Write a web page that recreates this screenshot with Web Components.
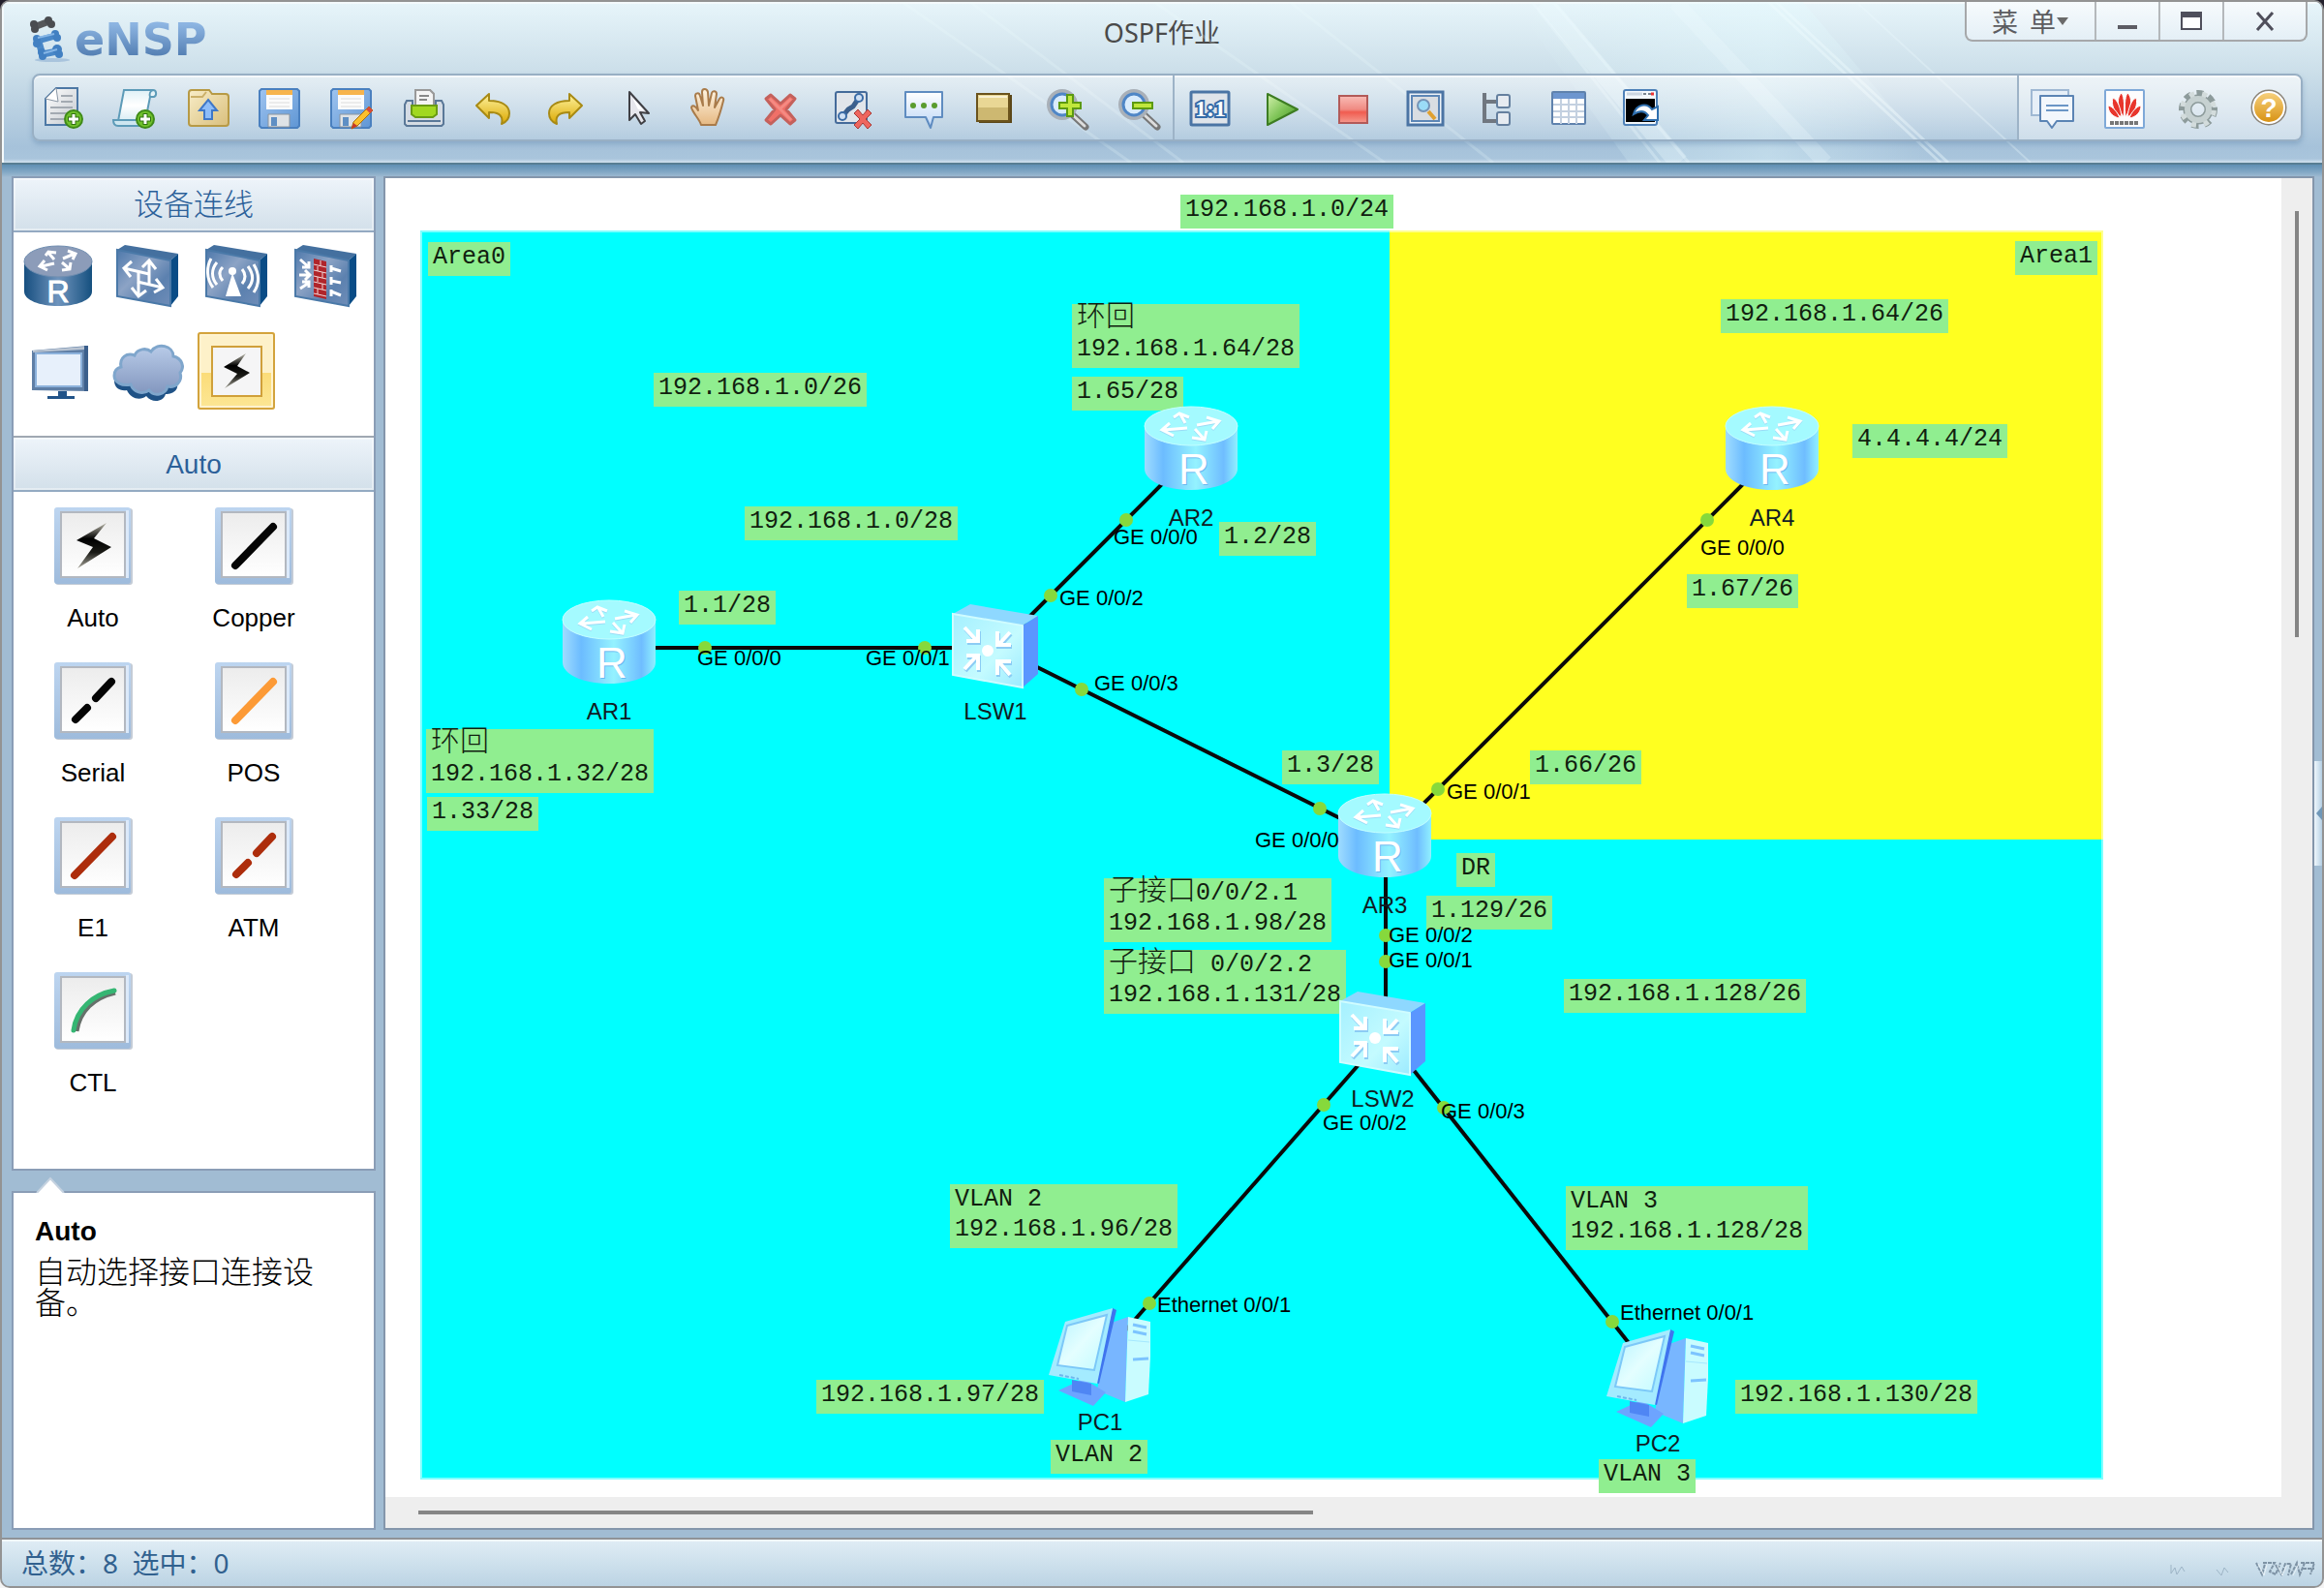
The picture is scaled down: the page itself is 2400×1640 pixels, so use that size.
<!DOCTYPE html>
<html lang="zh-CN">
<head>
<meta charset="utf-8">
<title>OSPF作业</title>
<style>
    html, body {
        margin: 0;
        height: 100%;
    }

    body {
        background: linear-gradient(#22202c 50%, #f4f4f4 50%);
        font-family: "Liberation Sans", "Noto Sans CJK SC", sans-serif;
    }
</style>
</head>
<body>
<ensp-window>
    <app-header slot="header"></app-header>
    <device-sidebar slot="sidebar"></device-sidebar>
    <topology-view slot="canvas"></topology-view>
    <status-bar slot="status">总数：8&nbsp; 选中：0</status-bar>
</ensp-window>

<script>
// ==================== 图标 ====================

const PLUS_BADGE = `
    <circle cx="35" cy="35" r="9" fill="#6fc02c" stroke="#3f8a18" stroke-width="2"/>
    <path d="M35 29v12M29 35h12" stroke="#2f7010" stroke-width="5"/>
    <path d="M35 30v10M30 35h10" stroke="#fff" stroke-width="3"/>`;

const FLOPPY = `
    <linearGradient id="f" x2="1" y2="1"><stop stop-color="#9fc4f0"/><stop offset="1" stop-color="#5f96d4"/></linearGradient>
    <path d="M7 4h37l2 2v36l-2 2H7l-2-2V6z" fill="url(#f)" stroke="#4a80bf" stroke-width="2"/>
    <rect x="12" y="5" width="27" height="5" fill="#f7b44c"/>
    <rect x="12" y="10" width="27" height="15" fill="#fbfbfb"/>
    <path d="M15 14h21M15 18h21M15 22h21" stroke="#dcdcdc" stroke-width="1"/>
    <path d="M14 30h22v13H14z" fill="#dfe3e6" stroke="#8a949e"/>
    <rect x="17" y="33" width="6" height="9" fill="#5f8fc4"/>`;

const LENS = `
    <path d="M30 30l14 13" stroke="#777" stroke-width="7" stroke-linecap="round"/>
    <path d="M30 30l13 12" stroke="#ddd" stroke-width="3" stroke-linecap="round"/>
    <circle cx="20" cy="20" r="14" fill="#cfe3f8" stroke="#a9b0b8" stroke-width="4"/>
    <circle cx="20" cy="20" r="11" fill="#d9ebfc" stroke="#4f86c6" stroke-width="3"/>`;

const UNDO = `
    <linearGradient id="u" x2="0" y2="1"><stop stop-color="#fdf3a0"/><stop offset="1" stop-color="#dca800"/></linearGradient>
    <path d="M7 21L20 9v7c13 0 21 5 21 13 0 5-3 9-8 11 2-8-2-12-13-12v6z" fill="url(#u)" stroke="#a88a14" stroke-width="2" stroke-linejoin="round"/>`;

const BOX_FACE = `
    <linearGradient id="b" x1="0" x2="1" y2="1"><stop stop-color="#4d78ab"/><stop offset=".4" stop-color="#8ca3c5"/><stop offset=".7" stop-color="#5c81af"/><stop offset="1" stop-color="#6f8db8"/></linearGradient>
    <path d="M9 14l8-5 55 9-8 7z" fill="#44709f"/>
    <path d="M64 25l8-7v44l-8 10z" fill="#0a4c86"/>
    <path d="M9 14l55 11v47L9 62z" fill="url(#b)" stroke="#4a79a8" stroke-width="2"/>`;

const TILE = `
    <linearGradient id="t" x2="0" y2="1"><stop stop-color="#bdd5f0"/><stop offset="1" stop-color="#9ebbdc"/></linearGradient>
    <linearGradient id="i" x2="0" y2="1"><stop stop-color="#ececec"/><stop offset="1" stop-color="#fff"/></linearGradient>
    <rect x="1" y="1" width="80" height="79" rx="3" fill="#c3cbd6"/>
    <rect width="79" height="79" rx="3" fill="url(#t)"/>
    <path d="M74 3h3v70h-3z" fill="#dbe9fa"/>
    <rect x="7" y="5" width="66" height="67" fill="url(#i)" stroke="#b3b8c0" stroke-width="2"/>`;

const BOLT = '<linearGradient id="z" x2="0" y2="1"><stop stop-color="#bbb9ac"/><stop offset=".35" stop-color="#000"/><stop offset=".65" stop-color="#1a1a16"/><stop offset="1" stop-color="#a9a79c"/></linearGradient>';

const line = (d, color) => `${TILE}<path d="${d}" fill="none" stroke="${color}" stroke-width="8" stroke-linecap="round"/>`;

const ICONS = {
    newTopo: [48, 48, `
        <linearGradient id="n" x2="1" y2="1"><stop stop-color="#fff"/><stop offset="1" stop-color="#c3c8ce"/></linearGradient>
        <path d="M17 3h22v38H6V14z" fill="url(#n)" stroke="#4d78a5" stroke-width="2"/>
        <path d="M22 11h12M22 17h12M11 23h23M11 29h18M11 35h14" stroke="#a3aab2" stroke-width="2"/>
        <path d="M17 3l2 14-13-3z" fill="#fff" stroke="#8b98a6"/>${PLUS_BADGE}`],
    newPaper: [48, 48, `
        <linearGradient id="n" x2="0" y2="1"><stop stop-color="#dff1f7"/><stop offset=".5" stop-color="#fff"/><stop offset="1" stop-color="#d8ecf4"/></linearGradient>
        <path d="M13 5h30c4 0 4 6 1 7h-4l-5 25H7z" fill="url(#n)" stroke="#5d9bb8" stroke-width="2"/>
        <path d="M43 5c-3 1-4 4-3 7" fill="none" stroke="#5d9bb8" stroke-width="2"/>
        <path d="M2 36h27v6H7c-4 0-5-3-5-6z" fill="#cde6f0" stroke="#5d9bb8" stroke-width="2"/>${PLUS_BADGE}`],
    open: [48, 48, `
        <linearGradient id="n" x2="1" y2="1"><stop stop-color="#f8edc8"/><stop offset="1" stop-color="#d9bf7c"/></linearGradient>
        <path d="M6 8c0-2 1-3 3-3h18l3 4h14c2 0 3 1 3 3v27c0 2-1 3-3 3H9c-2 0-3-1-3-3z" fill="url(#n)" stroke="#b79a45" stroke-width="2"/>
        <path d="M8 12h12l4-5" fill="none" stroke="#cbb069" stroke-width="2"/>
        <path d="M26 15l9 11h-5v9h-8v-9h-5z" fill="#8ebdf8" stroke="#3f78c8" stroke-width="2"/>`],
    save: [48, 48, FLOPPY],
    saveAs: [48, 48, `${FLOPPY}
        <path d="M44 22l4 4-16 16-6 3 2-7z" fill="#fbc02d" stroke="#a8700c"/>
        <path d="M44 22l4 4-3 3-4-4z" fill="#d9483b"/><path d="M28 39l4 3-6 3z" fill="#c8352c"/>`],
    print: [48, 48, `
        <path d="M18 5h15l4 4v14H18z" fill="#f4f4f4" stroke="#999" stroke-width="2"/>
        <path d="M22 11h10M22 15h8M22 19h10" stroke="#888" stroke-width="2"/>
        <path d="M9 16h6v10h24V16h6l2 4v20l-2 2H9l-2-2V20z" fill="#d5dce4" stroke="#5a7898" stroke-width="2"/>
        <path d="M18 5h15l4 4v14H18z" fill="#f4f4f4" stroke="#999" stroke-width="2"/>
        <path d="M22 11h10M22 15h8" stroke="#888" stroke-width="2"/>
        <path d="M14 21h26v9l-4 3H18l-4-3z" fill="#a1d821" stroke="#6a9c14" stroke-width="2"/>
        <path d="M10 37h34" stroke="#5a7898" stroke-width="2"/>`],
    undo: [48, 48, UNDO],
    redo: [48, 48, `<g transform="matrix(-1 0 0 1 49 0)">${UNDO}</g>`],
    pointer: [48, 48, '<path d="M17 7l20 22-9-1 5 9-4 3-6-10-6 6z" fill="#e6e6ec" stroke="#3f3f44" stroke-width="2" stroke-linejoin="round"/><path d="M20 13l12 13-6-1z" fill="#fff"/>'],
    hand: [48, 48, `
        <linearGradient id="n" x2="0" y2="1"><stop stop-color="#fff5e2"/><stop offset="1" stop-color="#e6b983"/></linearGradient>
        <path d="M17 41c-1-5-9-13-10-18 1-3 4-2 7 3L11 11c0-3 4-4 5 0l3 10-1-14c0-4 5-4 6 0l1 14 3-13c1-3 5-2 5 1l-2 14 5-9c2-3 5-1 4 2-2 8-5 18-8 25z" fill="url(#n)" stroke="#a97b4a" stroke-width="2" stroke-linejoin="round"/>`],
    remove: [48, 48, '<path d="M10 14l5-4 10 9 10-9 5 4-9 11 9 11-5 4-10-9-10 9-5-4 9-11z" fill="#f07068" stroke="#c4615c" stroke-width="3" stroke-linejoin="round"/><path d="M14 14l22 22M36 14L25 24" stroke="#f58a82" stroke-width="3"/>'],
    removeLink: [48, 48, `
        <rect x="8" y="7" width="32" height="32" rx="2" fill="#e1e5ea" stroke="#456b9a" stroke-width="2"/>
        <path d="M16 31l5-6 5-3 6-9" fill="none" stroke="#3b5f8c" stroke-width="5"/>
        <circle cx="15" cy="32" r="4" fill="#cfe0f4" stroke="#3b6ca6" stroke-width="2"/><circle cx="32" cy="13" r="4" fill="#cfe0f4" stroke="#3b6ca6" stroke-width="2"/>
        <path d="M27 29l4-4 5 6 5-6 4 4-6 6 6 6-4 4-5-6-5 6-4-4 6-6z" fill="#ee665e" stroke="#a83a36"/>`],
    text: [48, 48, `
        <linearGradient id="n" x2="0" y2="1"><stop stop-color="#fff"/><stop offset="1" stop-color="#bcd6f6"/></linearGradient>
        <path d="M6 7h38v26h-9l-3 11-5-11H6z" fill="url(#n)" stroke="#5f8cc0" stroke-width="2" stroke-linejoin="round"/>
        <g fill="#5a9c2e"><circle cx="14" cy="21" r="3"/><circle cx="25" cy="21" r="3"/><circle cx="36" cy="21" r="3"/></g>`],
    shape: [48, 48, `
        <path d="M8 10h34v29H8z" fill="#5c4718"/>
        <rect x="6" y="9" width="33" height="28" fill="#e9d795" stroke="#6b531c" stroke-width="2"/>
        <path d="M8 11h29v2H8z" fill="#f8f0d0"/><path d="M7 23h31v13H7z" fill="#cdb871"/>`],
    zoomIn: [48, 48, `${LENS}<path d="M28 9v24M16 21h24" stroke="#5c9a12" stroke-width="8"/><path d="M28 11v20M18 21h20" stroke="#c0e73c" stroke-width="4"/>`],
    zoomOut: [48, 48, `${LENS}<path d="M18 21h22" stroke="#5c9a12" stroke-width="8"/><path d="M20 21h18" stroke="#c0e73c" stroke-width="4"/>`],
    actual: [48, 48, `
        <rect x="5" y="7" width="39" height="34" rx="1" fill="#dfe4ea" stroke="#4b74a4" stroke-width="3"/>
        <text x="25" y="32" text-anchor="middle" font-family="Liberation Serif, serif" font-weight="bold" font-size="24" fill="#fff" stroke="#356ba8" stroke-width="4" paint-order="stroke">1:1</text>`],
    start: [48, 48, `
        <linearGradient id="n" x2="1" y2="1"><stop stop-color="#d5f2ae"/><stop offset=".5" stop-color="#7fc558"/><stop offset="1" stop-color="#3f8e1e"/></linearGradient>
        <path d="M10 9l31 16-31 16z" fill="url(#n)" stroke="#3d7d22" stroke-width="2" stroke-linejoin="round"/>`],
    stop: [48, 48, `
        <linearGradient id="n" x2="0" y2="1"><stop stop-color="#f9bcb6"/><stop offset=".5" stop-color="#f08a82"/><stop offset=".6" stop-color="#f05c50"/><stop offset="1" stop-color="#f59a8e"/></linearGradient>
        <rect x="10" y="11" width="29" height="28" fill="url(#n)" stroke="#b25a58" stroke-width="2"/>`],
    capture: [48, 48, `
        <rect x="7" y="7" width="36" height="34" fill="#eef3f8" stroke="#4b74a4" stroke-width="3"/>
        <rect x="11" y="11" width="28" height="26" fill="#d9dde2" stroke="#5c86b6" stroke-width="2"/>
        <path d="M28 27l7 8" stroke="#e0a030" stroke-width="4"/><circle cx="23" cy="21" r="6" fill="#9bdcf7" stroke="#7593b6" stroke-width="2"/>`],
    tree: [48, 48, `
        <path d="M12 8v29h13M12 17h13" fill="none" stroke="#707780" stroke-width="4"/>
        <g fill="#e6ebf1" stroke="#65809f" stroke-width="2"><rect x="25" y="10" width="13" height="13" rx="2"/><rect x="25" y="28" width="13" height="13" rx="2"/></g>`],
    table: [48, 48, `
        <rect x="8" y="7" width="34" height="33" rx="1" fill="#fff" stroke="#5f82ad" stroke-width="2"/>
        <path d="M9 8h32v6H9z" fill="#6d96cf"/>
        <path d="M9 20h32M9 27h32M9 33h32M17 14v26M25 14v26M33 14v26" stroke="#c3d0e0" stroke-width="2"/>`],
    console: [48, 48, `
        <rect x="8" y="5" width="34" height="36" rx="2" fill="#f3f8fc" stroke="#4e81b8" stroke-width="2"/>
        <path d="M11 9h16" stroke="#ccd6e0" stroke-width="3"/><path d="M28 9h3M33 9h3" stroke="#7a8590" stroke-width="2"/><path d="M36 9h3" stroke="#e33" stroke-width="3"/>
        <path d="M10 14h30v24H10z"/>
        <path d="M18 30c3-11 14-12 19-5l6-3v14H29l4-5c-4-5-9-5-15-1z" fill="#fff" stroke="#2f6fae" stroke-width="2"/>`],
    forum: [48, 48, `
        <path d="M1 5h38v26H1z" fill="#e6eff8" stroke="#9fb8d3" stroke-width="2"/>
        <path d="M10 11h34v26H27l-5 7-5-7h-7z" fill="#f2f7fc" stroke="#5b84b4" stroke-width="2" stroke-linejoin="round"/>
        <path d="M16 21h23M16 26h23" stroke="#6b96c6" stroke-width="2"/>`],
    huawei: [48, 48, `
        <rect x="3" y="5" width="40" height="39" rx="1" fill="#fdfdfe" stroke="#7fa9d8" stroke-width="2"/>
        <g fill="#e8352c" stroke="#fdfdfe"><path d="M22 33C15 22 15 12 20 8c3 5 3 15 2 25zM24 33c7-11 7-21 2-25-3 5-3 15-2 25z"/>
        <path d="M20 33C12 28 9 20 11 13c5 2 8 11 9 20zM26 33c8-5 11-13 9-20-5 2-8 11-9 20z"/>
        <path d="M18 34C11 33 6 28 6 21c5 1 10 7 12 13zM28 34c7-1 12-6 12-13-5 1-10 7-12 13z"/></g>
        <path d="M8 39h30" stroke="#777" stroke-width="4" stroke-dasharray="4 1"/>`],
    settings: [48, 48, `
        <circle cx="25" cy="25" r="17" fill="none" stroke="#8d9b9b" stroke-width="6" stroke-dasharray="7 6"/>
        <circle cx="25" cy="25" r="11" fill="none" stroke="#8d9b9b" stroke-width="9"/>
        <circle cx="25" cy="25" r="16" fill="none" stroke="#d3dcdc" stroke-width="6" stroke-dasharray="5 8" stroke-dashoffset="-1"/>
        <circle cx="25" cy="25" r="11" fill="none" stroke="#c6d1d1" stroke-width="6"/>`],
    help: [48, 48, `
        <linearGradient id="n" x2="0" y2="1"><stop stop-color="#f8d382"/><stop offset="1" stop-color="#d68f0e"/></linearGradient>
        <circle cx="24" cy="23" r="17" fill="url(#n)" stroke="#8b8478" stroke-width="3"/><circle cx="24" cy="23" r="16" fill="none" stroke="#fff" stroke-width="2"/>
        <text x="24" y="33" text-anchor="middle" font-family="Liberation Sans, sans-serif" font-weight="bold" font-size="28" fill="#fff">?</text>`],

    router: [80, 80, `
        <linearGradient id="n"><stop stop-color="#174f80"/><stop offset=".5" stop-color="#6f94bd"/><stop offset="1" stop-color="#15507f"/></linearGradient>
        <path d="M5 26v31c0 9 16 15 35 15s35-6 35-15V26z" fill="url(#n)"/>
        <ellipse cx="40" cy="26" rx="35" ry="16" fill="#8c9cb9" stroke="#6f8db0"/>
        <g fill="none" stroke="#fff" stroke-width="3"><path d="M36 24l-6-7M27 20l3-4 8 1M45 23l12-5M50 15l8 3-3 6M44 27l7 6M53 27l-1 7-8 1M36 28l-13 3M26 25l-5 6 8 4"/></g>
        <text x="40" y="68" text-anchor="middle" font-family="Liberation Sans, sans-serif" font-size="32" fill="#fff" stroke="#fff">R</text>`],
    switch: [80, 80, `${BOX_FACE}
        <g fill="none" stroke="#fff" stroke-width="3">
            <path d="M42 39L16 33M24 26l-8 7 7 9"/>
            <path d="M42 50V25M35 32l7-7 7 9"/>
            <path d="M30 47l26 6M49 44l7 9-9 5"/>
            <path d="M31 36v26M24 53l7 9 8-6"/>
        </g>`],
    wlan: [80, 80, `${BOX_FACE}
        <path d="M36 38l-7 24h16z" fill="#fff"/><circle cx="36" cy="36" r="4" fill="#fff"/>
        <path d="M26 32c-4 4-4 9 0 14M20 27c-6 7-6 16 0 23M14 23c-5 9-5 21 2 30M46 34c4 5 4 10 0 15M52 31c6 8 6 16 0 23M58 29c6 10 6 20 0 29" fill="none" stroke="#fff" stroke-width="3"/>`],
    firewall: [80, 80, `${BOX_FACE}
        <path d="M28 23l13 3v39l-13-3z" fill="#b0252b"/>
        <path d="M28 29l13 3M28 35l13 3M28 41l13 3M28 47l13 3M28 53l13 3M28 59l13 3M35 25v5M32 31v5M37 37v6M32 42v5M37 49v6M32 54v6" stroke="#f2d6d6" stroke-width="1"/>
        <path d="M14 24l9 8M23 26v6h-7M13 40h10M19 35l5 5-5 5M14 54l9-6M16 47h7v6M46 33l10 3M46 30v7M46 46l10 2M46 42v8M46 57l10 4M46 55v7" fill="none" stroke="#fff" stroke-width="3"/>`],
    terminal: [80, 80, `
        <path d="M13 19l58-5v47l-58-1z" fill="#5f7fa6"/><path d="M67 14h4v47h-4z" fill="#3b5f8c"/>
        <path d="M14 19l53-4v3l-53 3z" fill="#b9c4d2"/>
        <path d="M17 22h47v34H17z" fill="#e7f0fb" stroke="#8db2dc" stroke-width="2"/>
        <path d="M40 61h9v5h8v3H29v-3h11z" fill="#225489"/>`],
    cloud: [80, 80, `
        <linearGradient id="n" x2="0" y2="1"><stop stop-color="#b8cbe8"/><stop offset="1" stop-color="#8296be"/></linearGradient>
        <path d="M6 50c0 8 6 11 13 10 4 9 14 11 20 6 6 8 18 6 20-2 9 0 15-6 11-13l-30-9z" fill="#1f5286"/>
        <path d="M13 36c-2-10 6-15 14-12 3-7 12-8 17-4 7-10 23-6 23 5 9 2 12 11 7 17 3 9-5 16-13 14-2 9-14 11-19 4-7 5-16 2-19-6-9 2-17-2-17-9 0-5 3-8 7-9z" fill="url(#n)" stroke="#7fa6cc" stroke-width="3"/>`],
    cable: [80, 80, `${BOLT}
        <rect x="15" y="15" width="51" height="51" fill="#f5f5f6" stroke="#d0a03a" stroke-width="2"/>
        <path d="M50 22L27 36l14 7-13 15 26-16-13-7z" fill="url(#z)"/>`],

    auto: [81, 80, `${TILE}${BOLT}<path d="M54 16L23 34l17 7-16 22 35-22-18-9z" fill="url(#z)"/>`],
    copper: [81, 80, line('M21 60L60 20', '#050505')],
    serial: [81, 80, line('M22 59L34 47M43 37L59 20', '#050505')],
    pos: [81, 80, line('M21 60L60 20', '#fc9a36')],
    e1: [81, 80, line('M21 60L60 20', '#ad2d0c')],
    atm: [81, 80, line('M22 59L34 47M43 37L59 20', '#ad2d0c')],
    ctl: [81, 80, `${TILE}<path d="M23 61C26 40 41 26 63 21" fill="none" stroke="#66706a" stroke-width="5"/><path d="M20 60C23 38 40 23 62 19" fill="none" stroke="#35b673" stroke-width="5" stroke-linecap="round"/>`],

    nodeRouter: [96, 86, `
        <linearGradient id="n"><stop stop-color="#9fdcff"/><stop offset=".2" stop-color="#6cbcff"/><stop offset=".55" stop-color="#94f2ff"/><stop offset=".85" stop-color="#6fbdff"/><stop offset="1" stop-color="#90f0ff"/></linearGradient>
        <path d="M0 20v44c0 12 20 22 48 22s48-10 48-22V20z" fill="url(#n)"/>
        <ellipse cx="48" cy="20" rx="48" ry="20" fill="#a4faff" stroke="#c4ffff"/>
        <g fill="none" stroke="#9adcf6" stroke-width="3" transform="translate(0 1)"><path d="M42 17l-5-9M30 11l6-4 10 4M54 19l22-4M64 11l13 4-7 8M52 23l9 10M64 25l-2 9-13-2M44 22l-24 2M26 17l-8 7 12 6"/></g>
        <g fill="none" stroke="#fff" stroke-width="3"><path d="M42 17l-5-9M30 11l6-4 10 4M54 19l22-4M64 11l13 4-7 8M52 23l9 10M64 25l-2 9-13-2M44 22l-24 2M26 17l-8 7 12 6"/></g>
        <text x="52" y="81" text-anchor="middle" font-family="Liberation Sans, sans-serif" font-size="44" fill="#6ab8f0">R</text>
        <text x="51" y="80" text-anchor="middle" font-family="Liberation Sans, sans-serif" font-size="44" fill="#fff">R</text>`],
    nodeSwitch: [88, 86, `
        <linearGradient id="n" x2="1" y2="1"><stop stop-color="#a5f0ff"/><stop offset=".6" stop-color="#c4fbff"/><stop offset="1" stop-color="#9beaff"/></linearGradient>
        <path d="M0 10L18 0l70 12-16 10z" fill="#8ed8ff"/><path d="M72 22l16-10v60L72 86z" fill="#5a96ff"/>
        <path d="M0 10l72 12v64L0 73z" fill="url(#n)" stroke="#cffcff" stroke-width="2"/>
        <g fill="none" stroke="#8cccf4" stroke-width="4" transform="translate(1 2)"><path d="M12 24l13 14M26 26v12H14M59 29L47 42M46 28v14h14M12 67l13-14M14 53h12v15M59 73L47 59M46 73V59h14"/></g>
        <g fill="none" stroke="#fff" stroke-width="4"><path d="M12 24l13 14M26 26v12H14M59 29L47 42M46 28v14h14M12 67l13-14M14 53h12v15M59 73L47 59M46 73V59h14"/></g>
        <circle cx="36" cy="48" r="6" fill="#fff"/>`],
    nodePc: [106, 102, `
        <linearGradient id="n" x2="1" y2="1"><stop stop-color="#b6f4ff"/><stop offset=".5" stop-color="#e4feff"/><stop offset="1" stop-color="#c0fbff"/></linearGradient>
        <path d="M62 16l20-7-3 88-29-12z" fill="#78b6ff"/>
        <path d="M82 9l23 5v36l-2 39-24 8z" fill="#c9fcff"/>
        <path d="M87 17l14 3M87 24l14 3M87 53l16-1" stroke="#7cc4ff" stroke-width="3"/><path d="M82 33l22 2" stroke="#a5e8ff"/>
        <path d="M10 85l26-12 23 14-13 14z" fill="#6da4ff"/><path d="M24 74l20 4v12l-20-4z" fill="#4f86f4"/>
        <path d="M66 0l4 2-18 76-6-2z" fill="#3f74ee"/>
        <path d="M17 14L66 0 50 78 0 69z" fill="#a4ebff"/>
        <path d="M19 18l41-11-13 57-38-5z" fill="url(#n)" stroke="#7cc8f8" stroke-width="2"/>
        <path d="M11 69l20 4" stroke="#6fb6ee" stroke-width="2" stroke-dasharray="4 2"/>`]
};

class EnspIcon extends HTMLElement {
    static get observedAttributes() {
        return ['name'];
    }

    constructor() {
        super();
        this.attachShadow({ mode: 'open' });
    }

    attributeChangedCallback() {
        const icon = ICONS[this.getAttribute('name')];
        if (!icon) return;
        const [w, h, body] = icon;
        this.shadowRoot.innerHTML = `
            <style>
                :host { display: block; flex: none; }
                svg { display: block; overflow: visible; }
            </style>
            <svg width="${w}" height="${h}" viewBox="0 0 ${w} ${h}" aria-hidden="true">${body}</svg>
        `;
    }
}

// ==================== 窗口框架 ====================

class EnspWindow extends HTMLElement {
    constructor() {
        super();
        this.attachShadow({ mode: 'open' }).innerHTML = `
            <style>
                :host {
                    display: flex;
                    flex-direction: column;
                    box-sizing: border-box;
                    min-height: 100vh;
                    border: 2px solid #939393;
                    border-radius: 10px;
                    background: #a1bcd3;
                    overflow: hidden;
                }

                main {
                    flex: 1;
                    display: grid;
                    grid-template-columns: 376px minmax(0, 1fr) 8px;
                    column-gap: 8px;
                    padding: 12px 0 8px 10px;
                    background: linear-gradient(#5f8fb3, #84a9c6 8px, #a1bcd3 13px);
                }

                .canvas {
                    display: grid;
                    margin-right: -8px;
                }

                .handle {
                    align-self: center;
                    justify-self: end;
                    width: 8px;
                    height: 108px;
                    padding: 0;
                    margin-bottom: 82px;
                    border: none;
                    background: linear-gradient(90deg, #eef6fb, #cfe1ef 60%, #b3cde2);
                    display: flex;
                    align-items: center;
                    justify-content: flex-end;
                }
            </style>
            <slot name="header"></slot>
            <main>
                <slot name="sidebar"></slot>
                <div class="canvas"><slot name="canvas"></slot></div>
                <button class="handle" aria-label="展开">
                    <svg width="6" height="14"><path d="M6 0v14L0 7z" fill="#6f97b8"/></svg>
                </button>
            </main>
            <slot name="status"></slot>
        `;
    }
}

class AppHeader extends HTMLElement {
    constructor() {
        super();
        const left = [
            ['newTopo', '新建拓扑'], ['newPaper', '新建试卷'], ['open', '打开'], ['save', '保存'], ['saveAs', '另存为'],
            ['print', '打印'], ['undo', '撤销'], ['redo', '恢复'], ['pointer', '选择'], ['hand', '拖动'],
            ['remove', '删除'], ['removeLink', '删除连线'], ['text', '文本'], ['shape', '调色板'], ['zoomIn', '放大'], ['zoomOut', '缩小']
        ];
        const middle = [
            ['actual', '原始大小'], ['start', '启动设备'], ['stop', '停止设备'], ['capture', '数据抓包'],
            ['tree', '显示所有接口'], ['table', '显示网格'], ['console', '打开所有命令行']
        ];
        const right = [['forum', '论坛'], ['huawei', '官网'], ['settings', '设置'], ['help', '帮助']];
        const group = (items) => items.map(([icon, label]) => `
            <button aria-label="${label}"><ensp-icon name="${icon}"></ensp-icon></button>`).join('');

        this.attachShadow({ mode: 'open' }).innerHTML = `
            <style>
                :host {
                    display: block;
                    position: relative;
                    height: 166px;
                    border-bottom: 2px solid #587e93;
                    background: linear-gradient(#e7f5fa, #cbdee9 74px, #a6c2da 150px, #a9c5dc 162px, #d3e3ee);
                    box-shadow: inset 2px 2px 0 #f4fafc;
                }

                .shine {
                    position: absolute;
                    top: 0;
                    right: 296px;
                    pointer-events: none;
                }

                .title-row {
                    display: grid;
                    grid-template-columns: 1fr auto 1fr;
                    height: 74px;
                    align-items: start;
                }

                .logo {
                    display: flex;
                    align-items: center;
                    gap: 5px;
                    padding: 12px 0 0 28px;
                    font: bold 46px/54px "DejaVu Sans", sans-serif;
                }

                .logo span {
                    background: linear-gradient(#8db5e2 20%, #5580b4 80%);
                    background-clip: text;
                    color: transparent;
                }

                h1 {
                    margin: 12px 0 0;
                    font: 27px/40px "Noto Sans", "Noto Sans CJK SC", sans-serif;
                    color: #4a4a4a;
                }

                .controls {
                    justify-self: end;
                    display: flex;
                    height: 39px;
                    margin-right: 15px;
                    border: 2px solid #a6a8aa;
                    border-top: none;
                    border-radius: 0 0 8px 8px;
                    background: linear-gradient(#f7fbfd, #e4eff6);
                }

                .controls button {
                    width: 66px;
                    padding: 0;
                    border: none;
                    border-left: 2px solid #b4b8bb;
                    background: none;
                    font: 27px/38px "Noto Sans CJK SC", sans-serif;
                    color: #5c5c60;
                    display: flex;
                    align-items: center;
                    justify-content: center;
                }

                .controls .menu {
                    width: 132px;
                    border-left: none;
                }

                .controls .close {
                    width: 86px;
                }

                .toolbar {
                    position: relative;
                    display: flex;
                    box-sizing: border-box;
                    height: 70px;
                    margin: 0 20px 0 31px;
                    border: 2px solid #98afc4;
                    border-radius: 8px;
                    background: linear-gradient(rgba(255, 255, 255, .5), rgba(255, 255, 255, .12));
                    box-shadow: inset 0 2px 0 rgba(255, 255, 255, .6), 0 3px 5px rgba(90, 130, 170, .4);
                }

                .group {
                    display: flex;
                    align-items: center;
                    gap: 26px;
                    padding: 0 12px;
                    border-right: 2px solid #9db3c7;
                }

                .group:first-child {
                    padding-left: 6px;
                }

                .group:nth-child(2) {
                    flex: 1;
                }

                .group:last-child {
                    padding-right: 9px;
                    border: none;
                    border-radius: 0 6px 6px 0;
                    background: rgba(255, 255, 255, .35);
                }

                .group button {
                    padding: 2px 0 0;
                    border: none;
                    background: none;
                }
            </style>
            <svg class="shine" width="1200" height="166" viewBox="900 2 1200 166" aria-hidden="true">
                <linearGradient id="g"><stop stop-color="#e4fbff" stop-opacity="0"/><stop offset=".6" stop-color="#e4fbff" stop-opacity=".4"/><stop offset="1" stop-color="#e4fbff" stop-opacity="0"/></linearGradient>
                <path d="M1560 2h300l140 166h-320z" fill="url(#g)"/>
                <g stroke="#f0fdff" fill="none">
                    <path d="M930 2l236 166M1000 2l220 166M1190 2l238 166M1330 2l210 166" stroke-width="3" opacity=".2"/>
                    <path d="M1592 2l140 166" stroke-width="20" opacity=".3"/>
                    <path d="M1580 2l132 166M1602 2l140 166" stroke-width="3" opacity=".3"/>
                    <path d="M1728 2l155 166" stroke-width="16" opacity=".25"/>
                    <path d="M1824 2l178 166M1832 2l178 166" stroke-width="3" opacity=".4"/>
                    <path d="M1915 2l180 166" stroke-width="2" opacity=".3"/>
                </g>
            </svg>
            <div class="title-row">
                <div class="logo">
                    <svg width="42" height="48" viewBox="0 0 42 48" aria-hidden="true">
                        <ellipse cx="24" cy="45" rx="18" ry="2" fill="#a9c4dd"/>
                        <path d="M5 11L21 5" stroke="#55575a" stroke-width="7"/>
                        <g fill="#4a4c50"><circle cx="5" cy="8" r="4"/><circle cx="6" cy="13" r="4"/><circle cx="20" cy="4" r="4"/><circle cx="23" cy="8" r="4"/></g>
                        <path d="M9 25L27 20M10 26l4 14M14 39l15-3" fill="none" stroke="#4a88c8" stroke-width="7"/>
                        <g fill="#4280c2"><circle cx="8" cy="23" r="4"/><circle cx="8" cy="28" r="4"/><circle cx="27" cy="18" r="4"/><circle cx="29" cy="22" r="4"/><circle cx="13" cy="37" r="4"/><circle cx="14" cy="41" r="4"/><circle cx="29" cy="34" r="5"/><circle cx="31" cy="39" r="4"/></g>
                        <path d="M9 22l17-4M15 38l14-4" stroke="#86b6e6" stroke-width="2"/>
                    </svg>
                    <span>eNSP</span>
                </div>
                <h1>OSPF作业</h1>
                <div class="controls">
                    <button class="menu">菜&nbsp;&nbsp;单<svg width="14" height="10"><path d="M1 1h12L7 9z" fill="#6a6a6a"/></svg></button>
                    <button aria-label="最小化"><svg width="22" height="20"><path d="M1 16h20" stroke="#5c5c64" stroke-width="4"/></svg></button>
                    <button aria-label="最大化"><svg width="22" height="20"><path d="M1 1h20v17H1z" fill="#fff" stroke="#4f4f5b" stroke-width="2"/><path d="M0 0h22v6H0z" fill="#4f4f5b"/></svg></button>
                    <button class="close" aria-label="关闭"><svg width="22" height="20"><path d="M3 1l16 18M19 1L3 19" stroke="#4f4f5b" stroke-width="3"/></svg></button>
                </div>
            </div>
            <div class="toolbar" role="toolbar">
                <div class="group">${group(left)}</div>
                <div class="group">${group(middle)}</div>
                <div class="group">${group(right)}</div>
            </div>
        `;
    }
}

// ==================== 左侧设备栏 ====================

class DeviceSidebar extends HTMLElement {
    constructor() {
        super();
        const categories = [
            ['router', '路由器'], ['switch', '交换机'], ['wlan', '无线局域网'], ['firewall', '防火墙'],
            ['terminal', '终端'], ['cloud', '其它设备'], ['cable', '设备连线']
        ];
        const cables = ['Auto', 'Copper', 'Serial', 'POS', 'E1', 'ATM', 'CTL'];

        this.attachShadow({ mode: 'open' }).innerHTML = `
            <style>
                :host {
                    display: flex;
                    flex-direction: column;
                    gap: 21px;
                }

                section {
                    position: relative;
                    box-sizing: border-box;
                    border: 2px solid #8a9db6;
                    background: #fff;
                }

                .library {
                    flex: 1;
                }

                h2 {
                    margin: 0;
                    height: 54px;
                    border-bottom: 2px solid #94aac2;
                    background: linear-gradient(#eef4fa, #d3e0ea);
                    box-shadow: inset 0 0 0 2px rgba(255, 255, 255, .4);
                    font-weight: normal;
                    font-size: 28px;
                    line-height: 56px;
                    text-align: center;
                    color: #2b6099;
                }

                h2.cjk {
                    font-size: 31px;
                    font-weight: 300;
                }

                .categories {
                    display: grid;
                    grid-template-columns: repeat(4, 80px);
                    gap: 19px 12px;
                    height: 206px;
                    padding: 4px 0 0 6px;
                    align-content: start;
                    border-bottom: 2px solid #a0a8b2;
                }

                button {
                    padding: 0;
                    border: none;
                    background: none;
                    font: inherit;
                    color: #000;
                }

                .categories .active {
                    border-radius: 3px;
                    background: linear-gradient(#fdf1c9 52%, #fbdc78 52%, #fce796);
                    box-shadow: inset 0 0 0 2px #d3a33c, inset 0 0 0 4px #fff3cf;
                }

                .cables {
                    display: grid;
                    grid-template-columns: repeat(2, 120px);
                    gap: 30px 46px;
                    padding: 16px 0 0 22px;
                }

                .cables button {
                    display: flex;
                    flex-direction: column;
                    align-items: center;
                    gap: 18px;
                    font-size: 26px;
                    line-height: 32px;
                }

                .hint {
                    flex: 0 0 350px;
                    padding: 24px 22px;
                }

                .hint svg {
                    position: absolute;
                    left: 22px;
                    top: -17px;
                }

                h3 {
                    margin: 0 0 10px;
                    font-size: 28px;
                    line-height: 32px;
                }

                p {
                    margin: 0;
                    width: 300px;
                    font-size: 32px;
                    line-height: 32px;
                    font-weight: 300;
                }
            </style>
            <section class="library">
                <h2 class="cjk">设备连线</h2>
                <div class="categories">
                    ${categories.map(([icon, label]) => `
                    <button class="${icon === 'cable' ? 'active' : ''}" aria-label="${label}"><ensp-icon name="${icon}"></ensp-icon></button>`).join('')}
                </div>
                <h2>Auto</h2>
                <div class="cables">
                    ${cables.map((name) => `
                    <button><ensp-icon name="${name.toLowerCase()}"></ensp-icon>${name}</button>`).join('')}
                </div>
            </section>
            <section class="hint">
                <svg width="34" height="17"><path d="M2 17L16 2l14 15" fill="#fff" stroke="#c5d2e0" stroke-width="2"/></svg>
                <h3>Auto</h3>
                <p>自动选择接口连接设备。</p>
            </section>
        `;
    }
}

// ==================== 拓扑画布 ====================

/** 画布上的元素，坐标由 x / y 属性给出 */
class CanvasItem extends HTMLElement {
    constructor() {
        super();
        this.attachShadow({ mode: 'open' });
    }

    connectedCallback() {
        this.style.left = `${this.getAttribute('x')}px`;
        this.style.top = `${this.getAttribute('y')}px`;
        this.render();
    }
}

class NetLabel extends CanvasItem {
    render() {
        this.shadowRoot.innerHTML = `
            <style>
                :host {
                    display: block;
                    position: absolute;
                    padding: 0 5px 4px;
                    background: #90ee90;
                    font: 25px/31px "Liberation Mono", "Noto Sans CJK SC", monospace;
                    color: #10200f;
                    white-space: nowrap;
                }

                ::slotted(b) {
                    font-weight: 300;
                    font-size: 30px;
                    line-height: 26px;
                }
            </style>
            <slot></slot>
        `;
    }
}

class PortLabel extends CanvasItem {
    render() {
        this.shadowRoot.innerHTML = `
            <style>
                :host {
                    display: block;
                    position: absolute;
                    font-size: 22px;
                    line-height: 26px;
                    color: #000;
                    white-space: nowrap;
                }
            </style>
            <slot></slot>
        `;
    }
}

class NetNode extends CanvasItem {
    render() {
        this.shadowRoot.innerHTML = `
            <style>
                :host {
                    display: flex;
                    flex-direction: column;
                    align-items: center;
                    gap: 15px;
                    position: absolute;
                    font-size: 24px;
                    line-height: 28px;
                    color: #101c24;
                }

                :host([icon="nodeSwitch"]) {
                    gap: 11px;
                }

                :host([icon="nodePc"]) {
                    gap: 2px;
                }
            </style>
            <ensp-icon name="${this.getAttribute('icon')}"></ensp-icon>
            <slot></slot>
        `;
    }
}

class TopologyView extends HTMLElement {
    constructor() {
        super();
        const links = [
            [231, 485, 629, 485], [832, 286, 629, 489], [629, 483, 1032, 684], [1432, 286, 1032, 686],
            [1033, 686, 1033, 880], [1031, 886, 737, 1221], [1031, 882, 1314, 1241]
        ];
        const ports = [
            [330, 485], [557, 485], [765, 353], [687, 431], [719, 528], [965, 651], [1365, 353], [1087, 631],
            [1033, 782], [1033, 809], [969, 957], [1093, 960], [789, 1162], [1267, 1181]
        ];

        this.attachShadow({ mode: 'open' }).innerHTML = `
            <style>
                :host {
                    display: grid;
                    grid-template-columns: minmax(0, 1fr) 32px;
                    grid-template-rows: minmax(0, 1fr) 32px;
                    border: 2px solid #8496ab;
                    background: #eee;
                }

                .stage {
                    position: relative;
                    min-height: 1362px;
                    background: #fff;
                    overflow: hidden;
                }

                .area {
                    position: absolute;
                    box-sizing: border-box;
                }

                .area0 {
                    left: 36px;
                    top: 54px;
                    width: 1738px;
                    height: 1290px;
                    border: 2px solid #80ffff;
                    background: #0ff;
                }

                .area1 {
                    left: 1037px;
                    top: 54px;
                    width: 737px;
                    height: 629px;
                    border: 2px solid #ffff90;
                    border-width: 2px 2px 0 0;
                    background: #ffff20;
                }

                .links {
                    position: absolute;
                    left: 0;
                    top: 0;
                }

                .vbar {
                    padding: 34px 14px;
                }

                .vbar i {
                    display: block;
                    width: 4px;
                    height: 440px;
                    background: #858585;
                }

                .hbar {
                    padding: 14px 34px;
                }

                .hbar i {
                    display: block;
                    width: 924px;
                    height: 4px;
                    background: #858585;
                }
            </style>
            <div class="stage">
                <div class="area area0"></div>
                <div class="area area1"></div>

                <net-label x="821" y="17">192.168.1.0/24</net-label>
                <net-label x="44" y="66">Area0</net-label>
                <net-label x="277" y="201">192.168.1.0/26</net-label>
                <net-label x="709" y="130"><b>环回</b><br>192.168.1.64/28</net-label>
                <net-label x="709" y="205">1.65/28</net-label>
                <net-label x="371" y="339">192.168.1.0/28</net-label>
                <net-label x="861" y="355">1.2/28</net-label>
                <net-label x="303" y="426">1.1/28</net-label>
                <net-label x="42" y="569"><b>环回</b><br>192.168.1.32/28</net-label>
                <net-label x="43" y="639">1.33/28</net-label>
                <net-label x="926" y="591">1.3/28</net-label>
                <net-label x="1683" y="65">Area1</net-label>
                <net-label x="1379" y="125">192.168.1.64/26</net-label>
                <net-label x="1515" y="254">4.4.4.4/24</net-label>
                <net-label x="1344" y="409">1.67/26</net-label>
                <net-label x="1182" y="591">1.66/26</net-label>
                <net-label x="1106" y="697">DR</net-label>
                <net-label x="1075" y="741">1.129/26</net-label>
                <net-label x="742" y="723"><b>子接口</b>0/0/2.1<br>192.168.1.98/28</net-label>
                <net-label x="742" y="797"><b>子接口</b> 0/0/2.2<br>192.168.1.131/28</net-label>
                <net-label x="1217" y="827">192.168.1.128/26</net-label>
                <net-label x="583" y="1039">VLAN 2<br>192.168.1.96/28</net-label>
                <net-label x="1219" y="1041">VLAN 3<br>192.168.1.128/28</net-label>
                <net-label x="445" y="1241">192.168.1.97/28</net-label>
                <net-label x="687" y="1303">VLAN 2</net-label>
                <net-label x="1253" y="1323">VLAN 3</net-label>
                <net-label x="1394" y="1241">192.168.1.130/28</net-label>

                <svg class="links" width="1800" height="1360" aria-hidden="true">
                    <g stroke="#0a0a0a" stroke-width="4">
                        ${links.map(([x1, y1, x2, y2]) => `<line x1="${x1}" y1="${y1}" x2="${x2}" y2="${y2}"/>`).join('')}
                    </g>
                    <g fill="#86d93c">
                        ${ports.map(([x, y]) => `<circle cx="${x}" cy="${y}" r="7"/>`).join('')}
                    </g>
                </svg>

                <net-node x="183" y="436" icon="nodeRouter">AR1</net-node>
                <net-node x="784" y="236" icon="nodeRouter">AR2</net-node>
                <net-node x="984" y="636" icon="nodeRouter">AR3</net-node>
                <net-node x="1384" y="236" icon="nodeRouter">AR4</net-node>
                <net-node x="586" y="440" icon="nodeSwitch">LSW1</net-node>
                <net-node x="986" y="840" icon="nodeSwitch">LSW2</net-node>
                <net-node x="685" y="1167" icon="nodePc">PC1</net-node>
                <net-node x="1261" y="1189" icon="nodePc">PC2</net-node>

                <port-label x="322" y="483">GE 0/0/0</port-label>
                <port-label x="496" y="483">GE 0/0/1</port-label>
                <port-label x="752" y="358">GE 0/0/0</port-label>
                <port-label x="696" y="421">GE 0/0/2</port-label>
                <port-label x="732" y="509">GE 0/0/3</port-label>
                <port-label x="898" y="671">GE 0/0/0</port-label>
                <port-label x="1358" y="369">GE 0/0/0</port-label>
                <port-label x="1096" y="621">GE 0/0/1</port-label>
                <port-label x="1036" y="769">GE 0/0/2</port-label>
                <port-label x="1036" y="795">GE 0/0/1</port-label>
                <port-label x="968" y="963">GE 0/0/2</port-label>
                <port-label x="1090" y="951">GE 0/0/3</port-label>
                <port-label x="797" y="1151">Ethernet 0/0/1</port-label>
                <port-label x="1275" y="1159">Ethernet 0/0/1</port-label>
            </div>
            <div class="vbar"><i></i></div>
            <div class="hbar"><i></i></div>
        `;
    }
}

// ==================== 状态栏 ====================

class StatusBar extends HTMLElement {
    constructor() {
        super();
        this.attachShadow({ mode: 'open' }).innerHTML = `
            <style>
                :host {
                    display: flex;
                    align-items: center;
                    justify-content: space-between;
                    height: 48px;
                    padding: 0 6px 0 20px;
                    border-top: 2px solid #8f9296;
                    background: linear-gradient(#e0edf5, #bcd4e4);
                    box-shadow: inset 0 2px 0 #f1f7fa;
                    font: 28px/40px "Noto Sans", "Noto Sans CJK SC", sans-serif;
                    color: #31618f;
                }

                svg {
                    margin-top: 12px;
                }
            </style>
            <span><slot></slot></span>
            <svg width="152" height="18" viewBox="0 0 152 18" fill="none" aria-hidden="true">
                <path d="M2 5v9l4-6 2 7 5-8 3 5M49 10l5 6 3-8 4 5" stroke="#9db4c6" stroke-width="1"/>
                <path d="M90 3l6 12 3-11M97 3h12l-5 9 6 3 5-12M110 5l6 10 4-11h6l-3 12M126 15l6-12 3 12 5-12M136 3h14l-4 12M138 9h12" stroke="#7e93a5" stroke-width="2" stroke-dasharray="4 1"/>
                <path d="M92 4l6 12 3-11M112 6l5 10 4-10M128 16l6-12" stroke="#eaf3f8" stroke-width="1"/>
            </svg>
        `;
    }
}

// 注册自定义元素
customElements.define('ensp-icon', EnspIcon);
customElements.define('net-label', NetLabel);
customElements.define('port-label', PortLabel);
customElements.define('net-node', NetNode);
customElements.define('topology-view', TopologyView);
customElements.define('device-sidebar', DeviceSidebar);
customElements.define('app-header', AppHeader);
customElements.define('status-bar', StatusBar);
customElements.define('ensp-window', EnspWindow);
</script>
</body>
</html>
